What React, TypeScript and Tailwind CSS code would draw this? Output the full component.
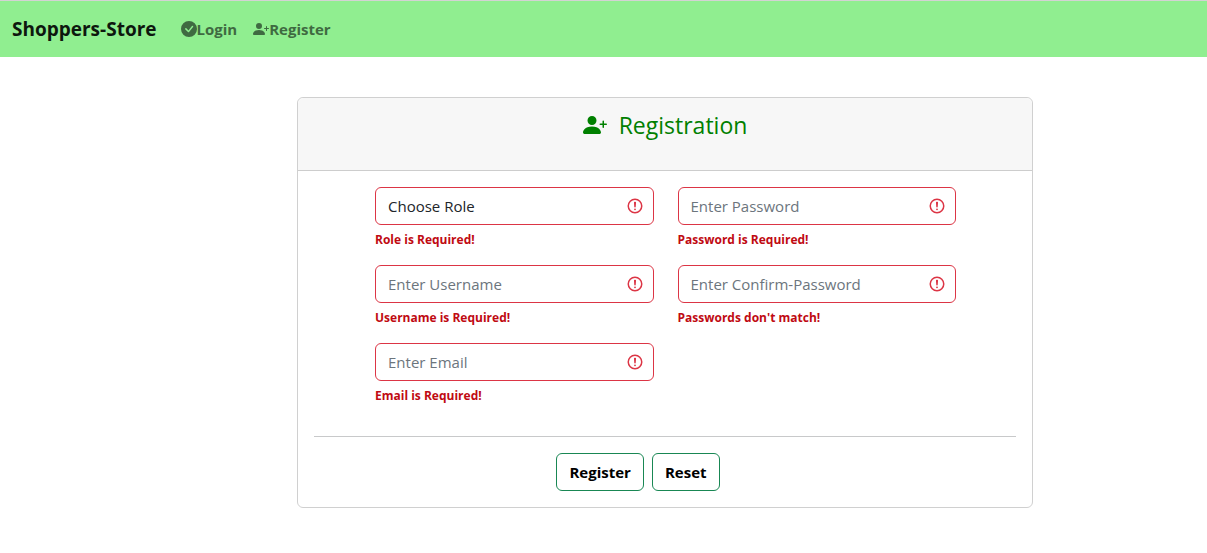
import { useId } from 'react';
import { BsCheckCircleFill, BsPersonPlusFill } from 'react-icons/bs';

type FieldProps = { label: string; error: string; type?: string };

function Warning() {
  return (
    <svg
      viewBox="0 0 12 12"
      fill="none"
      stroke="currentColor"
      aria-hidden
      className="pointer-events-none absolute top-[10px] right-[10px] h-[18px] w-[18px] text-[#dc3545]"
    >
      <circle cx="6" cy="6" r="4.5" />
      <path strokeLinejoin="round" d="M5.8 3.6h.4L6 6.5z" />
      <circle cx="6" cy="8.2" r=".6" fill="currentColor" stroke="none" />
    </svg>
  );
}

const control =
  'block h-[38px] w-full appearance-none rounded-md border border-[#dc3545] bg-white pr-9 pl-3 text-[15px] leading-6 placeholder:text-[#6c757d] placeholder:opacity-100';

function ErrorText({ id, children }: { id: string; children: string }) {
  return (
    <p id={id} className="mt-[5px] text-[12px] leading-5 font-bold text-[#c00a12]">
      {children}
    </p>
  );
}

function Field({ label, error, type = 'text' }: FieldProps) {
  const id = useId();
  return (
    <div className="h-[62px]">
      <div className="relative">
        <input id={id} type={type} aria-label={label} placeholder={label} aria-invalid aria-describedby={`${id}-error`} className={control} />
        <Warning />
      </div>
      <ErrorText id={`${id}-error`}>{error}</ErrorText>
    </div>
  );
}

function RoleField() {
  const id = useId();
  return (
    <div className="h-[62px]">
      <div className="relative">
        <select id={id} aria-label="Role" aria-invalid aria-describedby={`${id}-error`} className={`${control} text-[#212529]`}>
          <option>Choose Role</option>
        </select>
        <Warning />
      </div>
      <ErrorText id={`${id}-error`}>Role is Required!</ErrorText>
    </div>
  );
}

export default function App() {
  return (
    <div className="font-['Segoe_UI','Open_Sans',sans-serif] text-[#212529]">
      <nav className="flex h-[57px] items-center gap-6 border-t border-[#d3d3d3] bg-[#90ee90] px-3">
        <a href="#" className="text-[19px] leading-8 font-bold text-[#0e170e]">Shoppers-Store</a>
        <div className="flex gap-4 text-[15px] leading-6 font-bold text-[#3f6a41]">
          <a href="#login" className="flex items-center">
            <BsCheckCircleFill aria-hidden className="h-4 w-4" />
            Login
          </a>
          <a href="#register" className="flex items-center">
            <BsPersonPlusFill aria-hidden className="h-4 w-4" />
            Register
          </a>
        </div>
      </nav>

      <main className="grid grid-cols-[297fr_736fr_174fr] pt-10">
        <section className="col-start-2 rounded-md border border-[#d0d0d0] bg-white">
          <header className="flex h-[73px] items-start justify-center rounded-t-md border-b border-[#cdcdcd] bg-[#f7f7f7] pt-[11px]">
            <h1 className="flex items-center gap-3 text-[23px] leading-8 text-[#008000]">
              <BsPersonPlusFill aria-hidden className="h-6 w-6" />
              Registration
            </h1>
          </header>
          <form className="p-4" onSubmit={(e) => e.preventDefault()}>
            <div className="grid grid-cols-2 gap-x-6 pr-[60px] pl-[61px]">
              <div className="flex flex-col gap-4">
                <RoleField />
                <Field label="Enter Username" error="Username is Required!" />
                <Field label="Enter Email" type="email" error="Email is Required!" />
              </div>
              <div className="flex flex-col gap-4">
                <Field label="Enter Password" type="password" error="Password is Required!" />
                <Field label="Enter Confirm-Password" type="password" error="Passwords don't match!" />
              </div>
            </div>
            <hr className="mt-[31px] mb-4 border-[#c8c9ca]" />
            <div className="flex justify-center gap-2 pr-[54px]">
              <button type="submit" className="rounded-md border border-[#198754] px-3 py-1.5 text-[15px] leading-6 font-bold text-black">
                Register
              </button>
              <button type="reset" className="rounded-md border border-[#198754] px-3 py-1.5 text-[15px] leading-6 font-bold text-black">
                Reset
              </button>
            </div>
          </form>
        </section>
      </main>
    </div>
  );
}
